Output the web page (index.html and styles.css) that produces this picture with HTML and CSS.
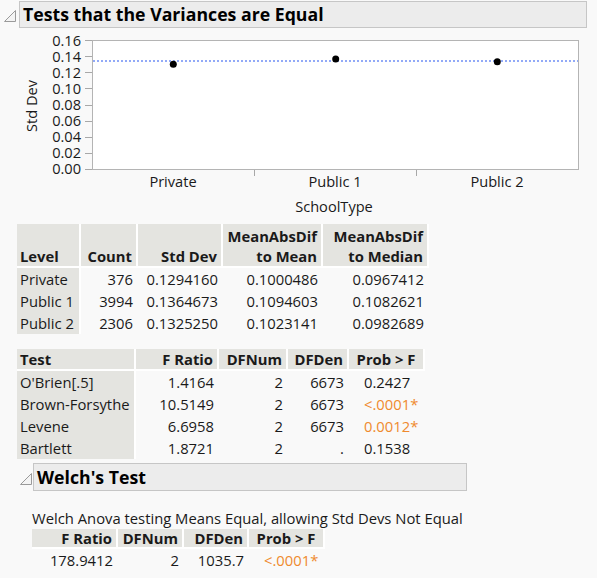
FILE: index.html
```html
<!DOCTYPE html>
<html>
<head>
<meta charset="utf-8">
<link rel="stylesheet" href="styles.css">
</head>
<body>
<div class="outline top">
  <div class="outline-head">
    <svg class="disc" width="12" height="12" viewBox="0 0 12 12"><path d="M0.5 11.5 L11.5 11.5 L11.5 0.5 Z" fill="#f4f4f4" stroke="#9a9a9a" stroke-width="1"/></svg>
    <div class="title-bar">Tests that the Variances are Equal</div>
  </div>
  <div class="outline-body">
    <svg class="chart" width="597" height="192" viewBox="0 30 597 192">
      <rect x="92.5" y="41.5" width="486" height="129" fill="#ffffff" stroke="#b4b4b4" stroke-width="1"/>
      <g stroke="#a8a8a8" stroke-width="1">
        <line x1="85" y1="41.5" x2="92" y2="41.5"/>
        <line x1="85" y1="57.5" x2="92" y2="57.5"/>
        <line x1="85" y1="73.5" x2="92" y2="73.5"/>
        <line x1="85" y1="89.5" x2="92" y2="89.5"/>
        <line x1="85" y1="106.5" x2="92" y2="106.5"/>
        <line x1="85" y1="122.5" x2="92" y2="122.5"/>
        <line x1="85" y1="138.5" x2="92" y2="138.5"/>
        <line x1="85" y1="154.5" x2="92" y2="154.5"/>
        <line x1="85" y1="170.5" x2="92" y2="170.5"/>
        <line x1="254.5" y1="171" x2="254.5" y2="177"/>
        <line x1="416.5" y1="171" x2="416.5" y2="177"/>
      </g>
      <g class="ytick" text-anchor="end">
        <text x="81" y="46.5">0.16</text>
        <text x="81" y="62.5">0.14</text>
        <text x="81" y="78.5">0.12</text>
        <text x="81" y="94.5">0.10</text>
        <text x="81" y="111">0.08</text>
        <text x="81" y="127">0.06</text>
        <text x="81" y="143">0.04</text>
        <text x="81" y="159">0.02</text>
        <text x="81" y="175">0.00</text>
      </g>
      <text class="axis-title" transform="translate(37 107) rotate(-90)" text-anchor="middle">Std Dev</text>
      <line x1="93" y1="62" x2="578" y2="62" stroke="#6f8ff5" stroke-width="1.3" stroke-dasharray="2 2"/>
      <circle cx="173.3" cy="65.3" r="3.5" fill="#000"/>
      <circle cx="335.7" cy="60" r="3.5" fill="#000"/>
      <circle cx="497.3" cy="62.7" r="3.5" fill="#000"/>
      <g class="xtick" text-anchor="middle">
        <text x="173" y="188">Private</text>
        <text x="335" y="188">Public 1</text>
        <text x="497" y="188">Public 2</text>
      </g>
      <text class="axis-title" x="334" y="213" text-anchor="middle">SchoolType</text>
    </svg>

    <table class="rpt t1">
      <colgroup><col class="c-level"><col class="c-count"><col class="c-sd"><col class="c-mean"><col class="c-med"></colgroup>
      <thead>
        <tr><th class="l">Level</th><th>Count</th><th>Std Dev</th><th>MeanAbsDif<br>to Mean</th><th>MeanAbsDif<br>to Median</th></tr>
      </thead>
      <tbody>
        <tr><td class="l">Private</td><td>376</td><td>0.1294160</td><td>0.1000486</td><td>0.0967412</td></tr>
        <tr><td class="l">Public 1</td><td>3994</td><td>0.1364673</td><td>0.1094603</td><td>0.1082621</td></tr>
        <tr><td class="l">Public 2</td><td>2306</td><td>0.1325250</td><td>0.1023141</td><td>0.0982689</td></tr>
      </tbody>
    </table>

    <table class="rpt t2">
      <colgroup><col class="c-test"><col class="c-fr"><col class="c-dfn"><col class="c-dfd"><col class="c-p"></colgroup>
      <thead>
        <tr><th class="l">Test</th><th>F Ratio</th><th>DFNum</th><th>DFDen</th><th class="pc">Prob &gt; F</th></tr>
      </thead>
      <tbody>
        <tr><td class="l">O'Brien[.5]</td><td>1.4164</td><td>2</td><td>6673</td><td class="p">0.2427</td></tr>
        <tr><td class="l">Brown-Forsythe</td><td>10.5149</td><td>2</td><td>6673</td><td class="p sig">&lt;.0001*</td></tr>
        <tr><td class="l">Levene</td><td>6.6958</td><td>2</td><td>6673</td><td class="p sig">0.0012*</td></tr>
        <tr><td class="l">Bartlett</td><td>1.8721</td><td>2</td><td>.</td><td class="p">0.1538</td></tr>
      </tbody>
    </table>

    <div class="outline sub">
      <div class="outline-head">
        <svg class="disc" width="12" height="12" viewBox="0 0 12 12"><path d="M0.5 11.5 L11.5 11.5 L11.5 0.5 Z" fill="#f4f4f4" stroke="#9a9a9a" stroke-width="1"/></svg>
        <div class="title-bar">Welch's Test</div>
      </div>
      <div class="outline-body">
        <p class="note">Welch Anova testing Means Equal, allowing Std Devs Not Equal</p>
        <table class="rpt t3">
          <colgroup><col class="c-wf"><col class="c-wn"><col class="c-wd"><col class="c-wp"></colgroup>
          <thead>
            <tr><th>F Ratio</th><th>DFNum</th><th>DFDen</th><th class="pc">Prob &gt; F</th></tr>
          </thead>
          <tbody>
            <tr><td>178.9412</td><td>2</td><td>1035.7</td><td class="p sig">&lt;.0001*</td></tr>
          </tbody>
        </table>
      </div>
    </div>
  </div>
</div>
</body>
</html>
```

FILE: styles.css
```css
html, body {
  margin: 0;
  padding: 0;
  background: #f9f9f9;
}
body {
  width: 597px;
  height: 578px;
  overflow: hidden;
  font-family: "Open Sans", "Noto Sans", sans-serif;
  font-size: 14.8px;
  color: #1a1a1a;
}
.outline-head {
  display: flex;
  align-items: center;
}
.top > .outline-head {
  padding: 1px 10px 0 4px;
}
.disc {
  flex: none;
  margin-right: 3px;
  margin-top: 3px;
}
.title-bar {
  flex: 1;
  height: 25px;
  line-height: 25px;
  background: #ececec;
  border: 1px solid #c6c6c6;
  font-weight: 700;
  font-size: 17.7px;
  color: #000;
  padding-left: 3px;
}
.top > .outline-body {
  padding-left: 17px;
}
.chart {
  display: block;
  margin-left: -17px;
  margin-top: 1px;
}
.chart text {
  font-family: "Open Sans", "Noto Sans", sans-serif;
  font-size: 14.6px;
  fill: #1a1a1a;
}
.rpt {
  border-collapse: collapse;
  table-layout: fixed;
}
.rpt th {
  background: #e4e4e0;
  font-weight: 700;
  text-align: right;
  vertical-align: bottom;
  padding: 0 4px 0 0;
  border-right: 2px solid #fff;
  border-bottom: 2px solid #fff;
  line-height: 20px;
  white-space: nowrap;
}
.rpt td {
  text-align: right;
  padding: 0 4px 0 0;
  height: 22px;
  line-height: 22px;
  white-space: nowrap;
}
.rpt th.l, .rpt td.l {
  text-align: left;
  padding: 0 0 0 3px;
}
.rpt td.l {
  background: #e4e4e0;
  border-right: 2px solid #fff;
}
.rpt td.p {
  text-align: left;
  padding-left: 16px;
}
.sig {
  color: #ef8a2e;
}
.t1 { margin-top: 3px; }
.t1 th { height: 42px; }
.c-level { width: 63px; }
.c-count { width: 57px; }
.c-sd { width: 85px; }
.c-mean { width: 100px; }
.c-med { width: 106px; }
.t2 { margin-top: 15px; }
.c-test { width: 118px; }
.c-fr { width: 83px; }
.c-dfn { width: 69px; }
.c-dfd { width: 61px; }
.c-p { width: 76px; }
.rpt th.pc { text-align: center; padding: 0; }
.sub { margin-top: 4px; }
.sub > .outline-head {
  padding-left: 3px;
  width: 447px;
}
.sub .disc { margin-right: 1px; }
.sub .title-bar {
  height: 26px;
  line-height: 26px;
}
.sub > .outline-body {
  padding-left: 15px;
}
.note {
  margin: 18px 0 0 0;
  line-height: 18px;
}
.t3 { margin-top: 2px; }
.t3 th { height: 18px; line-height: 18px; }
.c-wf { width: 85px; }
.c-wn { width: 66px; }
.c-wd { width: 65px; }
.c-wp { width: 76px; }
```
